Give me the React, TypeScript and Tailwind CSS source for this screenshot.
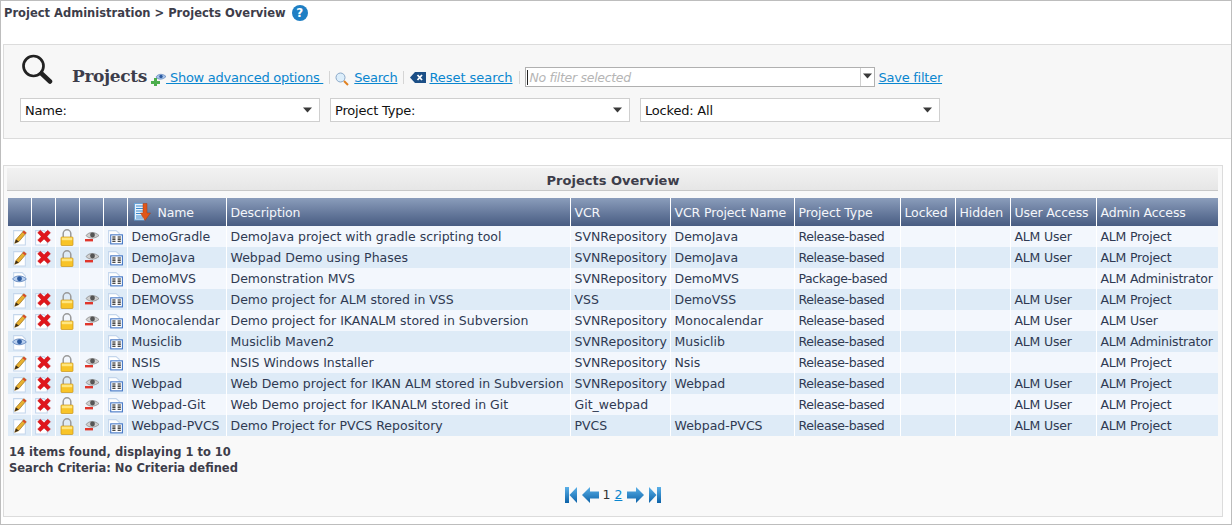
import React from "react";

const F = "font-['DejaVu_Sans',sans-serif]";

const Doc = () => <path d="M2.5 1.5h8l3 3v10.5h-11z" fill="#fff" stroke="#c4d6ec" strokeWidth="1" />;

const Pencil = () => (
  <svg width="17" height="17" viewBox="0 0 16 16" className="block">
    <Doc />
    <path d="M3.5 13.5l1.2-3.6L12 1.6l2.4 2-7 8.2z" fill="#e8b030" stroke="#8a6414" strokeWidth=".6" />
    <path d="M12 1.6l2.4 2-1.2 1.4-2.4-2z" fill="#d8452e" />
    <path d="M3.5 13.5l1.2-3.6 2.7 1.9z" fill="#3a2a16" />
  </svg>
);
const Del = () => (
  <svg width="18" height="17" viewBox="0 0 17 16" className="block">
    <path d="M1.5 1.5h8l3 3v10.5h-11z" fill="#fff" stroke="#c4d6ec" strokeWidth="1" />
    <path d="M3.5 3.5L6 1.2 9.5 4.5 13 1.2 15.5 3.5 12.2 7 15.5 10.5 13 12.8 9.5 9.5 6 12.8 3.5 10.5 6.8 7z" fill="#e0161c" stroke="#c01218" strokeWidth=".5" />
  </svg>
);
const Lock = () => (
  <svg width="14" height="17" viewBox="0 0 14 17" className="block">
    <path d="M3.2 9V4.6a3.8 3.8 0 017.6 0V9" fill="none" stroke="#9a9a9a" strokeWidth="1.5" />
    <rect x="1" y="8" width="12" height="8.5" rx=".8" fill="#f8c428" stroke="#c8941a" strokeWidth=".7" />
    <rect x="1.8" y="8.6" width="10.4" height="2.6" fill="#ffe680" />
  </svg>
);
const EyeOff = () => (
  <svg width="16" height="14" viewBox="0 0 16 14" className="block ml-[2px]">
    <path d="M2 5.5C5 1.5 11 1.5 15 5.5 11 9 5 9 2 5.5z" fill="#cfcfcf" stroke="#808080" strokeWidth=".7" />
    <circle cx="8.5" cy="5" r="2.4" fill="#555" />
    <rect x="1" y="9" width="8" height="2.4" fill="#e0362c" />
  </svg>
);
const Eye = () => (
  <svg width="17" height="17" viewBox="0 0 16 16" className="block">
    <Doc />
    <path d="M1.5 7.5C4 3.7 11 3.7 14.5 7.5 11 11 4 11 1.5 7.5z" fill="#b8cfee" stroke="#4a74b4" strokeWidth=".7" />
    <circle cx="8" cy="7.3" r="2.3" fill="#2c5aa0" />
  </svg>
);
const Book = () => (
  <svg width="17" height="17" viewBox="0 0 16 16" className="block">
    <path d="M1.5 1.5h7l3 2.5v9h-10z" fill="#fff" stroke="#c4d6ec" />
    <rect x="3.5" y="5.5" width="11" height="8.5" fill="#fff" stroke="#3f73c4" />
    <path d="M5 7.5h3M5 9.5h3M5 11.5h3M10 7.5h3M10 9.5h3M10 11.5h3" stroke="#111" strokeWidth="1" />
  </svg>
);
const Caret = () => (
  <svg width="9" height="6" viewBox="0 0 9 6" className="block shrink-0"><path d="M0 .5h9L4.5 5.5z" fill="#3a3a3a" /></svg>
);
const SortIcon = () => (
  <svg width="18" height="18" viewBox="0 0 18 18" className="block">
    <rect x="0.5" y="0.5" width="10" height="16.5" fill="#e8f2fb" stroke="#6aa4d8" />
    <path d="M2 3h7M2 5.5h7M2 8h7M2 10.5h7M2 13h7M2 15h7" stroke="#3a8ad0" strokeWidth="1" />
    <path d="M9 0.5h4v9.5h3.5L11 17.5 6.5 10H9z" fill="#e0561a" stroke="#a83c10" strokeWidth=".5" />
  </svg>
);

const Sep = () => <span className="w-px h-[13px] bg-[#d5d5d5] mx-[6px]" />;

function Select({ label, w }: { label: string; w: string }) {
  return (
    <div className={`${w} h-6 flex items-center justify-between pl-1 pr-[7px] bg-white border border-[#cfcfcf] text-[13px] tracking-[-0.2px] text-[#111]`}>
      <span className="pt-[2px]">{label}</span>
      <Caret />
    </div>
  );
}

const widths = [23, 24, 24, 24, 24, 99, 344, 100, 124, 106, 55, 55, 86, 122];
const heads = ["Name", "Description", "VCR", "VCR Project Name", "Project Type", "Locked", "Hidden", "User Access", "Admin Access"];

type R = [string, string, string, string, string, string, string, boolean];
const rows: R[] = [
  ["DemoGradle", "DemoJava project with gradle scripting tool", "SVNRepository", "DemoJava", "Release-based", "ALM User", "ALM Project", true],
  ["DemoJava", "Webpad Demo using Phases", "SVNRepository", "DemoJava", "Release-based", "ALM User", "ALM Project", true],
  ["DemoMVS", "Demonstration MVS", "SVNRepository", "DemoMVS", "Package-based", "", "ALM Administrator", false],
  ["DEMOVSS", "Demo project for ALM stored in VSS", "VSS", "DemoVSS", "Release-based", "ALM User", "ALM Project", true],
  ["Monocalendar", "Demo project for IKANALM stored in Subversion", "SVNRepository", "Monocalendar", "Release-based", "ALM User", "ALM User", true],
  ["Musiclib", "Musiclib Maven2", "SVNRepository", "Musiclib", "Release-based", "ALM User", "ALM Administrator", false],
  ["NSIS", "NSIS Windows Installer", "SVNRepository", "Nsis", "Release-based", "", "ALM Project", true],
  ["Webpad", "Web Demo project for IKAN ALM stored in Subversion", "SVNRepository", "Webpad", "Release-based", "ALM User", "ALM Project", true],
  ["Webpad-Git", "Web Demo project for IKANALM stored in Git", "Git_webpad", "", "Release-based", "ALM User", "ALM Project", true],
  ["Webpad-PVCS", "Demo Project for PVCS Repository", "PVCS", "Webpad-PVCS", "Release-based", "ALM User", "ALM Project", true],
];

const Nav = ({ dir, end }: { dir: "l" | "r"; end?: boolean }) => (
  <svg width={end ? 12 : 17} height="16" viewBox={end ? "0 0 12 16" : "0 0 17 16"} className="block">
    <defs>
      <linearGradient id="navg" x1="0" x2="0" y1="0" y2="1">
        <stop offset="0" stopColor="#5ab0e8" />
        <stop offset="1" stopColor="#0c62a8" />
      </linearGradient>
    </defs>
    <g transform={dir === "r" ? (end ? "translate(12,0) scale(-1,1)" : "translate(17,0) scale(-1,1)") : undefined}>
      {end ? (
        <path d="M0 0h4v16H0zM4.5 8L12 0v16z" fill="url(#navg)" />
      ) : (
        <path d="M0 8L8 0v4.5h9v7H8V16z" fill="url(#navg)" />
      )}
    </g>
  </svg>
);

export default function App() {
  return (
    <div className={`${F} w-[1232px] h-[525px] overflow-hidden bg-white border border-[#bdbdbd] text-[#333a4a]`}>
      <div className="h-[43px] pl-[3px] pt-[4px] flex items-start gap-[6px]">
        <span className="text-[11.5px] leading-4 font-bold text-[#3d3d4a]">Project Administration &gt; Projects Overview</span>
        <span className="w-4 h-4 rounded-full bg-[#1f7fc4] text-white text-[12px] leading-4 font-bold text-center">?</span>
      </div>

      <div className="ml-[2px] h-[95px] bg-[#f7f7f7] border border-[#dcdcdc] border-r-0 pl-[16px] pt-2">
        <div className="flex items-start h-[46px]">
          <svg width="32" height="32" viewBox="0 0 32 32" className="block ml-[1px] mr-[19px]">
            <circle cx="12.5" cy="13" r="10" fill="none" stroke="#222" strokeWidth="2.7" />
            <path d="M20.5 20.5L29 28.5" stroke="#222" strokeWidth="4.5" strokeLinecap="round" />
          </svg>
          <span className="mt-[13px] text-[17px] leading-5 font-bold font-['DejaVu_Serif',serif] text-[#3d3d4a] tracking-[-0.35px]">Projects</span>
          <div className="mt-[14px] ml-[4px] flex items-center text-[13px] leading-5 text-[#0a86cf] tracking-[-0.25px]">
            <svg width="15" height="14" viewBox="0 0 15 14" className="block mt-[2px]">
              <path d="M5 5C7 1.5 12 1.5 15 4.5 12 8 7 8 5 5z" fill="#a9c4e8" stroke="#4a74b4" strokeWidth=".6" />
              <circle cx="10" cy="4.5" r="1.7" fill="#2c5aa0" />
              <path d="M3 6h3v3h3v3H6v2H3v-2H0V9h3z" fill="#4cae4c" />
            </svg>
            <span className="underline">&nbsp;Show advanced options&nbsp;</span>
            <Sep />
            <svg width="14" height="14" viewBox="0 0 14 14" className="block mr-[5px] mt-[2px] -ml-[1px]">
              <circle cx="5.5" cy="5.5" r="4.5" fill="#dceefb" stroke="#8aa8c8" />
              <path d="M9 9l4 4" stroke="#e08020" strokeWidth="2" />
            </svg>
            <span className="underline">Search</span>
            <Sep />
            <svg width="16" height="11" viewBox="0 0 16 11" className="block mr-[3px]">
              <path d="M0 5.5L5 0h11v11H5z" fill="#1c4f86" />
              <path d="M7.5 3l4.5 5M12 3L7.5 8" stroke="#fff" strokeWidth="1.8" />
            </svg>
            <span className="underline tracking-[-0.05px]">Reset search</span>
            <Sep />
            <div className="w-[350px] h-5 flex items-center bg-white border border-[#b0b0b0] -mt-[1px] -ml-[1px]">
              <span className="flex-1 pl-[2px] ml-px text-[12.5px] tracking-[-0.3px] italic text-[#b5b5b5] leading-4 border-l border-[#222] h-[15px]">No filter selected</span>
              <span className="w-[14px] h-full border-l border-[#d0d0d0] flex items-center justify-center pb-[3px]"><Caret /></span>
            </div>
            <span className="ml-[4px] underline mt-[1px]">Save filter</span>
          </div>
        </div>
        <div className="flex gap-[10px] -mt-[1px]">
          <Select label="Name:" w="w-[300px]" />
          <Select label="Project Type:" w="w-[300px]" />
          <Select label="Locked: All" w="w-[300px]" />
        </div>
      </div>

      <div className="ml-[2px] mt-[26px] w-[1220px] h-[352px] bg-[#f9f9f9] border border-[#dcdcdc] px-[3px] pt-[2px]">
        <div className="w-[1211px] pl-px h-[23px] bg-linear-to-b from-[#f2f2f2] to-[#e6e6e6] border-b border-[#c8c8c8] text-center text-[13px] leading-[25px] font-bold text-[#3d3d4a]">Projects Overview</div>
        <table className="mt-[7px] table-fixed border-collapse w-[1210px] ml-px">
          <colgroup>
            {widths.map((w, i) => <col key={i} style={{ width: w }} />)}
          </colgroup>
          <thead>
            <tr className="h-[28px] bg-linear-to-b from-[#8b9dbb] to-[#485c82] text-[#f4f6fa] text-[12.5px] tracking-[-0.12px] text-left font-normal">
              {[0, 1, 2, 3, 4].map((i) => <th key={i} className="border-r border-white p-0" />)}
              {heads.map((h, i) => (
                <th key={h} className="border-r border-white font-normal p-0 pl-[4px] pt-[2px] whitespace-nowrap last:border-r-0">
                  {i === 0 ? (
                    <span className="flex items-center pl-[2px] gap-[6px] -mt-[2px]"><SortIcon /><span className="pt-[2px]">{h}</span></span>
                  ) : h}
                </th>
              ))}
            </tr>
          </thead>
          <tbody className="text-[12.5px] text-[#2f3a52]">
            {rows.map((r, i) => {
              const td = "border-r border-white p-0 pl-[4px] pt-[2px] whitespace-nowrap h-[21px] overflow-hidden";
              const ic = "border-r border-white p-0 h-[21px]";
              const box = "flex items-center justify-center pt-px";
              return (
                <tr key={r[0]} className={i % 2 ? "bg-[#deebf7]" : "bg-[#f3f7fd]"}>
                  <td className={ic}><div className={box}>{r[7] ? <Pencil /> : <Eye />}</div></td>
                  <td className={ic}><div className={box}>{r[7] && <Del />}</div></td>
                  <td className={ic}><div className={box}>{r[7] && <Lock />}</div></td>
                  <td className={ic}><div className={box}>{r[7] && <EyeOff />}</div></td>
                  <td className={ic}><div className={box}><Book /></div></td>
                  <td className={td}>{r[0]}</td>
                  <td className={td}>{r[1]}</td>
                  <td className={td}>{r[2]}</td>
                  <td className={td}>{r[3]}</td>
                  <td className={`${td} tracking-[-0.4px]`}>{r[4]}</td>
                  <td className={td}></td>
                  <td className={td}></td>
                  <td className={`${td} tracking-[-0.2px]`}>{r[5]}</td>
                  <td className={`${td} tracking-[-0.2px] border-r-0`}>{r[6]}</td>
                </tr>
              );
            })}
          </tbody>
        </table>
        <div className="mt-[8px] ml-[2px] text-[11.5px] leading-[16px] font-bold text-[#3d3d4a]">
          <div>14 items found, displaying 1 to 10</div>
          <div>Search Criteria: No Criteria defined</div>
        </div>
        <div className="mt-[10px] flex items-center justify-center gap-[2px] text-[12.5px]">
          <Nav dir="l" end />
          <span className="w-px" />
          <Nav dir="l" />
          <span className="mx-[2px] text-[#333]">1</span>
          <span className="text-[#0a86cf] underline">2</span>
          <span className="w-[1px]" />
          <Nav dir="r" />
          <span className="w-px" />
          <Nav dir="r" end />
        </div>
      </div>
    </div>
  );
}
